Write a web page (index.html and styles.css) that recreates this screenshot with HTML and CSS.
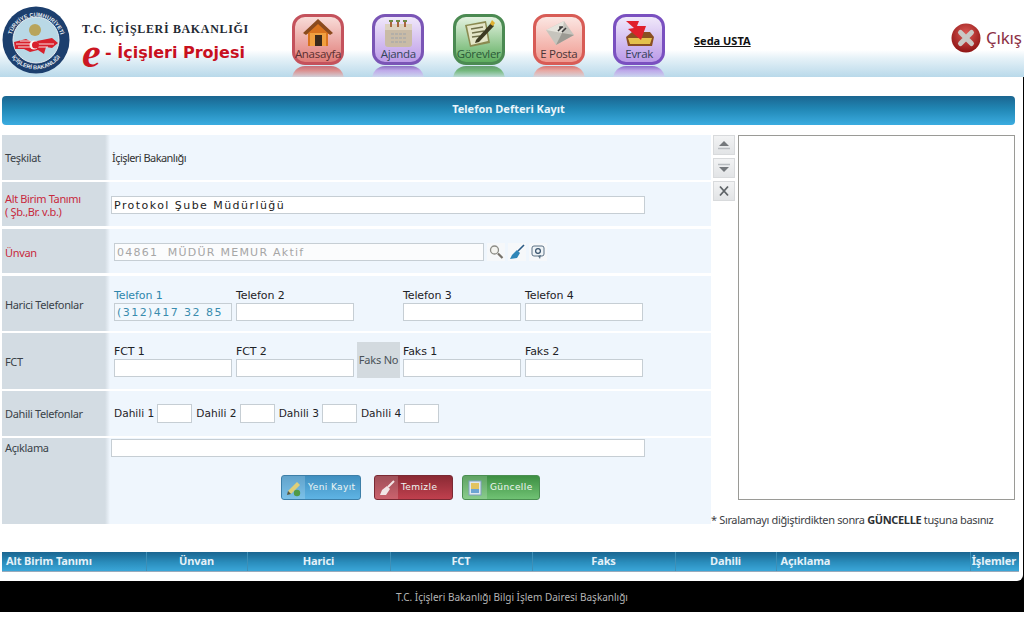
FILE: index.html
```html
<!DOCTYPE html>
<html lang="tr">
<head>
<meta charset="utf-8">
<title>Telefon Defteri Kayıt</title>
<link rel="stylesheet" href="styles.css">
</head>
<body>
<header class="top">
  <svg class="logo" viewBox="0 0 68 68" width="68" height="68">
    <defs>
      <path id="arcTop" d="M8.5 36 A25.5 25.5 0 0 1 59.5 36"/>
      <path id="arcBot" d="M5 41 A30 30 0 0 0 63 41"/>
    </defs>
    <circle cx="34" cy="34" r="33.5" fill="#1c3f6e"/>
    <circle cx="34" cy="34" r="23" fill="#b9d8e6" stroke="#e8eef2" stroke-width="1"/>
    <text class="logo-ring"><textPath href="#arcTop" startOffset="50%" text-anchor="middle">TÜRKİYE CUMHURİYETİ</textPath></text>
    <text class="logo-ring"><textPath href="#arcBot" startOffset="50%" text-anchor="middle">İÇİŞLERİ BAKANLIĞI</textPath></text>
    <circle cx="33" cy="24" r="6" fill="#b8a45c"/>
    <path d="M12 36 L24 33 L30 36 L40 34 L50 32 L56 37 L50 42 L44 41 L42 48 L36 44 L28 46 L22 43 L13 43 Z" fill="#d8202c"/>
    <path d="M14 38 H52 M16 41 H46 M18 35 H29" stroke="#f6dfe0" stroke-width="1"/>
    <circle cx="32" cy="39" r="4.5" fill="#f7f3f3"/>
    <circle cx="33.5" cy="39" r="3.5" fill="#d8202c"/>
  </svg>
  <div class="brand">
    <div class="brand-top">T.C. İÇİŞLERİ BAKANLIĞI</div>
    <div class="brand-bot"><span class="brand-e">e</span><span class="brand-name">- İçişleri Projesi</span></div>
  </div>
  <nav class="nav">
    <a class="tile tile-red">
      <span class="tile-face">
        <svg viewBox="0 0 34 30" width="34" height="30"><path d="M3 15 L17 2 L31 15 L27 16 V28 H7 V16 Z" fill="#d9741f"/><path d="M2 15 L17 1 L32 15 L29 17 L17 6 L5 17 Z" fill="#8a4a1e"/><rect x="9" y="15" width="16" height="13" fill="#f0a040"/><rect x="14" y="17" width="7" height="11" fill="#3b2a1c"/></svg>
        <span class="tile-label">Anasayfa</span>
      </span>
      <span class="tile-mirror"></span>
    </a>
    <a class="tile tile-purple">
      <span class="tile-face">
        <svg viewBox="0 0 34 30" width="34" height="30"><rect x="4" y="6" width="27" height="23" rx="3" fill="#c9bba6"/><rect x="4" y="6" width="27" height="6" fill="#ddd2c0"/><path d="M10 2 V9 M17 2 V9 M24 2 V9" stroke="#a8663c" stroke-width="2"/><path d="M8 3 H12 M15 3 H19 M22 3 H26" stroke="#6f8a45" stroke-width="2"/><path d="M10 16 H25 M10 20 H25 M10 24 H25" stroke="#b3afa8" stroke-width="2" stroke-dasharray="3 1"/></svg>
        <span class="tile-label">Ajanda</span>
      </span>
      <span class="tile-mirror"></span>
    </a>
    <a class="tile tile-green">
      <span class="tile-face">
        <svg viewBox="0 0 34 30" width="34" height="30"><path d="M3 7 L24 3 L28 25 L8 29 Z" fill="#8a8a50"/><path d="M5 8 L23 5 L26 23 L9 27 Z" fill="#e4e6c8"/><path d="M9 11 L21 9 M10 15 L22 13 M10 19 L18 18" stroke="#70704a" stroke-width="1.4"/><path d="M14 22 L29 5 L32 8 L17 24 L13 25 Z" fill="#3c3a22"/><path d="M28 6 L30 2 L33 5 L31 8 Z" fill="#e0b030"/></svg>
        <span class="tile-label">Görevler</span>
      </span>
      <span class="tile-mirror"></span>
    </a>
    <a class="tile tile-coral">
      <span class="tile-face">
        <svg viewBox="0 0 34 30" width="34" height="30"><path d="M4 12 L22 3 L32 17 L14 27 Z" fill="#c6c4bd"/><path d="M4 12 L20 15 L22 3 Z" fill="#e6e4dd"/><path d="M14 27 L20 15 L32 17 Z" fill="#9c9a93"/><path d="M16 13 L20 9 M20 14 L24 10 M18 12 L18 9 L21 9" stroke="#3c3c3c" stroke-width="1.6" fill="none"/></svg>
        <span class="tile-label">E Posta</span>
      </span>
      <span class="tile-mirror"></span>
    </a>
    <a class="tile tile-violet">
      <span class="tile-face">
        <svg viewBox="0 0 34 30" width="34" height="30"><path d="M4 19 L10 14 H28 L32 19 L30 28 H6 Z" fill="#8a4f22"/><path d="M6 20 H30 L28 26 H8 Z" fill="#e4c14e"/><path d="M4 3 L17 3 L15 8 L24 8 L19 22 L6 11 L12 10 Z" fill="#e0202c"/></svg>
        <span class="tile-label">Evrak</span>
      </span>
      <span class="tile-mirror"></span>
    </a>
  </nav>
  <a class="user">Seda USTA</a>
  <a class="exit">
    <svg viewBox="0 0 30 30" width="30" height="30"><defs><radialGradient id="exitGrad" cx="50%" cy="35%" r="65%"><stop offset="0" stop-color="#dd5a55"/><stop offset="1" stop-color="#8e1414"/></radialGradient></defs><circle cx="15" cy="15" r="14.5" fill="url(#exitGrad)"/><path d="M9.5 9.5 L20.5 20.5 M20.5 9.5 L9.5 20.5" stroke="#c9c9c6" stroke-width="5" stroke-linecap="round"/></svg>
    <span class="exit-text">Çıkış</span>
  </a>
</header>

<div class="shell">
  <main class="main">
    <h1 class="title-bar">Telefon Defteri Kayıt</h1>
    <div class="content">
      <section class="form">
        <div class="row row-1">
          <div class="label">Teşkilat</div>
          <div class="cell cell-static">İçişleri Bakanlığı</div>
        </div>
        <div class="row row-2">
          <div class="label label-req">Alt Birim Tanımı<br>( Şb.,Br. v.b.)</div>
          <div class="cell cell-wide"><input class="input input-wide input-dark" value="Protokol Şube Müdürlüğü"></div>
        </div>
        <div class="row row-3">
          <div class="label label-req">Ünvan</div>
          <div class="cell cell-unvan">
            <input class="input input-unvan" value="04861  MÜDÜR MEMUR Aktif" disabled>
            <span class="mini-tools">
              <span class="mini"><svg viewBox="0 0 16 16" width="16" height="16"><circle cx="6.5" cy="6" r="4" fill="#f4f4f0" stroke="#8c8c86" stroke-width="1.3"/><path d="M10 9.5 L14.5 14" stroke="#77726a" stroke-width="2.2"/></svg></span>
              <span class="mini"><svg viewBox="0 0 16 16" width="16" height="16"><path d="M15 1 L9 7" stroke="#2a5a86" stroke-width="1.6"/><path d="M8 6 L11 9 L8 14 L1 15 L3 11 Z" fill="#2f86b8"/></svg></span>
              <span class="mini"><svg viewBox="0 0 16 16" width="16" height="16"><rect x="2" y="2" width="12" height="10" rx="2" fill="#eef3f6" stroke="#5b7184"/><circle cx="8" cy="7" r="2.4" fill="none" stroke="#35506a" stroke-width="1.2"/><path d="M8 12 L10 15 L11 11" fill="#5b7184"/></svg></span>
            </span>
          </div>
        </div>
        <div class="row row-4">
          <div class="label label-low">Harici Telefonlar</div>
          <div class="cell cell-fields cell-phones">
            <label class="field field-blue">Telefon 1<input class="input input-blue" value="(312)417 32 85"></label>
            <label class="field">Telefon 2<input class="input"></label>
            <span></span>
            <label class="field">Telefon 3<input class="input"></label>
            <label class="field">Telefon 4<input class="input"></label>
          </div>
        </div>
        <div class="row row-5">
          <div class="label">FCT</div>
          <div class="cell cell-fields">
            <label class="field">FCT 1<input class="input"></label>
            <label class="field">FCT 2<input class="input"></label>
            <span class="faks-no">Faks No</span>
            <label class="field">Faks 1<input class="input"></label>
            <label class="field">Faks 2<input class="input"></label>
          </div>
        </div>
        <div class="row row-6">
          <div class="label">Dahili Telefonlar</div>
          <div class="cell cell-dahili">
            <label class="inline">Dahili 1<input class="input input-short"></label>
            <label class="inline">Dahili 2<input class="input input-short"></label>
            <label class="inline">Dahili 3<input class="input input-short"></label>
            <label class="inline">Dahili 4<input class="input input-short"></label>
          </div>
        </div>
        <div class="row row-7">
          <div class="label label-top">Açıklama</div>
          <div class="cell cell-desc">
            <input class="input input-wide">
            <div class="actions">
              <button class="btn btn-blue"><span class="btn-ico"><svg viewBox="0 0 18 18" width="18" height="18"><path d="M3 12 L12 3 L15 6 L6 15 Z" fill="#dfcf78"/><path d="M3 12 L6 15 L2 16 Z" fill="#5a5a40"/><circle cx="12" cy="14" r="3.2" fill="#4f9a48"/></svg></span><span class="btn-text">Yeni Kayıt</span></button>
              <button class="btn btn-red"><span class="btn-ico"><svg viewBox="0 0 18 18" width="18" height="18"><path d="M16 2 L10 8" stroke="#f2e6e6" stroke-width="2"/><path d="M9 7 L12 10 L8 16 L2 16 L4 11 Z" fill="#f2e6e6"/></svg></span><span class="btn-text">Temizle</span></button>
              <button class="btn btn-green"><span class="btn-ico"><svg viewBox="0 0 18 18" width="18" height="18"><rect x="3" y="2" width="12" height="14" fill="#dfe8ee" stroke="#7ea0bf"/><rect x="5" y="4" width="8" height="6" fill="#e2c360"/><rect x="5" y="10" width="8" height="4" fill="#6da4d4"/></svg></span><span class="btn-text">Güncelle</span></button>
            </div>
          </div>
        </div>
      </section>
      <aside class="side">
        <div class="side-top">
          <div class="order-tools">
            <button class="order"><svg viewBox="0 0 14 12" width="14" height="12"><path d="M7 2 L12 7 H2 Z" fill="#74787c"/><path d="M1 9.5 H13" stroke="#b8bcc0" stroke-width="1.5"/></svg></button>
            <button class="order"><svg viewBox="0 0 14 12" width="14" height="12"><path d="M1 2.5 H13" stroke="#b8bcc0" stroke-width="1.5"/><path d="M7 10 L12 5 H2 Z" fill="#74787c"/></svg></button>
            <button class="order"><svg viewBox="0 0 14 12" width="14" height="12"><path d="M3 1.5 L11 10.5 M11 1.5 L3 10.5" stroke="#5f6468" stroke-width="1.8"/></svg></button>
          </div>
          <div class="list-box"></div>
        </div>
        <p class="note">* Sıralamayı diğiştirdikten sonra <b>GÜNCELLE</b> tuşuna basınız</p>
      </aside>
    </div>
    <table class="grid-head">
      <colgroup>
        <col class="c1"><col class="c2"><col class="c3"><col class="c4"><col class="c5"><col class="c6"><col class="c7"><col class="c8">
      </colgroup>
      <thead>
        <tr>
          <th class="th-left">Alt Birim Tanımı</th>
          <th>Ünvan</th>
          <th>Harici</th>
          <th>FCT</th>
          <th>Faks</th>
          <th>Dahili</th>
          <th class="th-left">Açıklama</th>
          <th class="th-end">İşlemler</th>
        </tr>
      </thead>
    </table>
  </main>
  <footer class="footer">T.C. İçişleri Bakanlığı Bilgi İşlem Dairesi Başkanlığı</footer>
</div>
</body>
</html>
```
FILE: styles.css
```css
* { box-sizing: border-box; }
html, body { margin: 0; height: 622px; overflow: hidden; background: #fff; }
body { font-family: "DejaVu Sans", Verdana, sans-serif; font-size: 11px; color: #222; }

.top {
  height: 77px;
  display: flex;
  align-items: flex-start;
  overflow: hidden;
  background: linear-gradient(to bottom, #fff 0, #fff 50px, #e6f2f8 58px, #b9d9ea 77px);
}
.logo { flex: none; margin: 6px 0 0 2px; }
.logo-ring { font: bold 5.6px "Liberation Sans", sans-serif; fill: #e8edf2; }

.brand { width: 222px; flex: none; padding: 21px 0 0 12px; }
.brand-top {
  font: bold 12px/16px "Liberation Serif", serif;
  letter-spacing: .65px;
  color: #1f2a33;
  white-space: nowrap;
}
.brand-bot { display: flex; align-items: center; height: 26px; margin-top: 3px; }
.brand-e { font: italic bold 42px/26px "Liberation Serif", serif; color: #cc1622; width: 23px; }
.brand-name {
  font: bold 16px/26px "DejaVu Sans", sans-serif;
  color: #c8101e;
  white-space: nowrap;
}

.nav { display: flex; gap: 28.3px; width: 402px; flex: none; margin-top: 14px; }
.tile { width: 52px; flex: none; display: flex; flex-direction: column; }
.tile-face {
  height: 51px;
  border: 3px solid var(--edge);
  border-radius: 13px;
  background: linear-gradient(to bottom, var(--pale) 0, var(--soft) 100%);
  display: flex;
  flex-direction: column;
  align-items: center;
  padding-top: 1px;
}
.tile-label {
  font: 11.5px/14px "Open Sans", sans-serif;
  color: var(--ink);
  letter-spacing: -.3px;
  white-space: nowrap;
  margin-top: -1px;
}
.tile-mirror {
  height: 13px;
  margin-top: 1px;
  border-radius: 16px 16px 0 0;
  background: linear-gradient(to bottom, var(--edge) 0, var(--soft) 35%, #d4e6f0 100%);
  opacity: .8;
}
.tile-red { --edge: #c4525c; --soft: #e07c78; --pale: #f8dcd8; --ink: #5a2f30; }
.tile-purple { --edge: #7a55b6; --soft: #bd9ce8; --pale: #f0e8fa; --ink: #33465a; }
.tile-green { --edge: #4b8a52; --soft: #5fae60; --pale: #e4f2e0; --ink: #2b5a38; }
.tile-coral { --edge: #d85c56; --soft: #f09a90; --pale: #fbe6e2; --ink: #4a3436; }
.tile-violet { --edge: #7a50c0; --soft: #bb9ae8; --pale: #f0e8fa; --ink: #33405a; }

.user {
  width: 257px;
  flex: none;
  margin-top: 34px;
  font: bold 11px/14px "Noto Sans", sans-serif;
  color: #111;
  text-decoration: underline;
}
.exit { display: flex; align-items: center; gap: 5px; margin-top: 23px; flex: none; }
.exit-text { font: 17px/26px "Noto Sans", sans-serif; color: #8c3044; letter-spacing: -.2px; white-space: nowrap; }

.shell { background: #000; height: 535px; }
.main {
  height: 504px;
  margin-right: 1px;
  background: #fff;
  border-bottom-right-radius: 6px;
  padding: 19px 0 0 2px;
}
.title-bar {
  margin: 0;
  width: 1013px;
  height: 29px;
  border-radius: 4px;
  background: linear-gradient(to bottom, #1a6590 0, #2187b5 45%, #3bace0 100%);
  color: #eaf5fb;
  font: bold 11px/26px "Noto Sans", sans-serif;
  text-align: center;
}
.content { display: flex; margin-top: 10px; height: 389px; }

.form { width: 709px; flex: none; display: flex; flex-direction: column; }
.row { display: flex; flex: none; margin-bottom: 2px; }
.row-1 { height: 45px; }
.row-2 { height: 44px; margin-bottom: 3px; }
.row-3 { height: 44px; margin-bottom: 3px; }
.row-4 { height: 55px; }
.row-5 { height: 56px; }
.row-6 { height: 45px; }
.row-7 { height: 86px; margin-bottom: 0; }

.label {
  width: 108px;
  flex: none;
  display: flex;
  flex-direction: column;
  justify-content: center;
  padding-left: 3px;
  background: linear-gradient(to right, #d3dce3 0, #d3dce3 103px, #eff6fd 108px);
  font: 11px/13px "Noto Sans", sans-serif;
  letter-spacing: -.35px;
  color: #3a4248;
  white-space: nowrap;
}
.label-req { color: #c8283c; display: block; padding-top: 10px; }
.row-3 .label-req { padding-top: 17px; }
.label-low { padding-top: 2px; }
.label-top { justify-content: flex-start; padding-top: 3px; }

.cell { flex: 1; min-width: 0; background: #eff6fd; }
.cell-static {
  padding: 16px 0 0 2px;
  font: 11px/13px "Noto Sans", sans-serif;
  letter-spacing: -.55px;
  color: #333;
}
.cell-wide { padding: 14px 0 0 1px; }
.cell-unvan { display: flex; align-items: flex-start; padding: 14px 0 0 4px; }
.cell-fields {
  display: grid;
  grid-template-columns: 119px 118px 43px 119px 118px;
  column-gap: 3px;
  align-items: start;
  padding: 11px 0 0 4px;
}
.cell-phones { padding-top: 12px; }
.cell-dahili { display: flex; align-items: flex-start; gap: 4px; padding: 13px 0 0 4px; }
.cell-desc { padding: 1px 0 0 1px; }

.input {
  display: block;
  height: 18px;
  width: 118px;
  padding: 0 2px;
  border: 1px solid #c6ced4;
  border-radius: 0;
  background: #fff;
  font: 11px/16px "DejaVu Sans", sans-serif;
  letter-spacing: 1.45px;
  color: #333;
  outline: 0;
}
.input-wide { width: 534px; }
.input-dark { color: #1c1c1c; }
.input-unvan { width: 370px; color: #a6a6a6; background: #fbfcfd; letter-spacing: 1.25px; white-space: pre; }
.input-blue { color: #3a8cae; background: #f2f8fd; }
.input-short { width: 35px; height: 19px; display: inline-block; margin-left: 3px; }

.field { display: block; font: 11px/15px "DejaVu Sans", sans-serif; color: #1e2226; letter-spacing: -.1px; }
.field-blue { color: #2e86ac; }
.inline { display: flex; align-items: center; font: 10.6px/19px "DejaVu Sans", sans-serif; color: #1e2226; white-space: nowrap; }

.faks-no {
  width: 43px;
  height: 36px;
  margin-top: -2px;
  background: #d3dadf;
  font: 11px/36px "Noto Sans", sans-serif;
  letter-spacing: -.2px;
  color: #4a5258;
  text-align: center;
  white-space: nowrap;
}

.mini-tools { display: flex; gap: 3px; margin-left: 3px; }
.mini { width: 18px; height: 18px; display: flex; align-items: center; justify-content: center; background: #f6f8fa; }

.actions { display: flex; margin: 18px 0 0 170px; }
.btn {
  display: flex;
  align-items: stretch;
  height: 25px;
  padding: 0;
  border: 1px solid;
  border-radius: 3px;
  overflow: hidden;
  color: #eef6f2;
  font: 9px/23px "DejaVu Sans", sans-serif;
  letter-spacing: .4px;
}
.btn-ico { width: 23px; flex: none; display: flex; align-items: center; justify-content: center; background: rgba(255,255,255,.18); }
.btn-text { flex: 1; text-align: left; padding-left: 3px; white-space: nowrap; }
.btn-blue { width: 80px; border-color: #3d7fa8; background: linear-gradient(to bottom, #3f8fc0, #5fb4e4); margin-right: 13px; }
.btn-red { width: 79px; border-color: #7a2a34; background: linear-gradient(to bottom, #8a2a34, #c0404e); margin-right: 9px; }
.btn-green { width: 78px; border-color: #4b8f52; background: linear-gradient(to bottom, #3d8f42, #70c274); }
.btn-green .btn-ico { width: 24px; }

.side { flex: 1; padding-left: 2px; }
.side-top { display: flex; align-items: flex-start; }
.order-tools { width: 25px; flex: none; display: flex; flex-direction: column; gap: 3px; }
.order {
  width: 22px;
  height: 20px;
  padding: 0;
  border: 1px solid #d8dadc;
  background: linear-gradient(to bottom, #f2f3f4, #e2e4e6);
  display: flex;
  align-items: center;
  justify-content: center;
}
.list-box { width: 277px; height: 365px; background: #fff; border: 1px solid #9a9a96; }
.note {
  margin: 13px 0 0 -2px;
  font: 11px/14px "Noto Sans", sans-serif;
  letter-spacing: -.35px;
  color: #3c4044;
  white-space: nowrap;
}
.note b { color: #2c3034; }

.grid-head {
  width: 1017px;
  margin-top: 28px;
  border-collapse: collapse;
  table-layout: fixed;
}
.c1 { width: 144px; } .c2 { width: 101px; } .c3 { width: 143px; } .c4 { width: 142px; }
.c5 { width: 143px; } .c6 { width: 101px; } .c7 { width: 194px; } .c8 { width: 49px; }
.grid-head th {
  height: 19px;
  padding: 0;
  background: linear-gradient(to bottom, #1a6590 0, #2a8dbc 55%, #3aa6d8 100%);
  border-right: 1px solid #3e8fb6;
  border-bottom: 1px solid #9ab;
  color: #e4f1f8;
  font: bold 11px/18px "Noto Sans", sans-serif;
  letter-spacing: -.1px;
  white-space: nowrap;
  text-align: center;
}
.grid-head th.th-left { text-align: left; padding-left: 4px; }
.grid-head th.th-end { text-align: right; padding-right: 3px; border-right: 0; }

.footer {
  height: 31px;
  color: #b4b4b4;
  font: 10px/32px "Noto Sans", sans-serif;
  text-align: center;
}
```
